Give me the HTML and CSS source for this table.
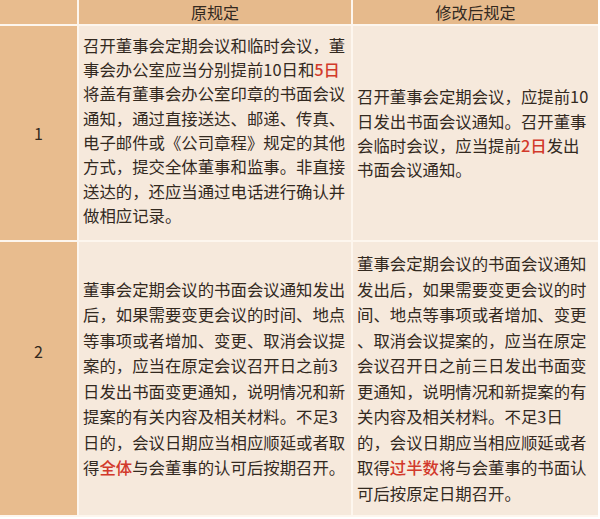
FILE: index.html
```html
<!DOCTYPE html>
<html lang="zh">
<head>
<meta charset="utf-8">
<link rel="stylesheet" href="styles.css">
</head>
<body>
<div class="table">
  <div class="cell head side"></div>
  <div class="cell head">原规定</div>
  <div class="cell head">修改后规定</div>

  <div class="cell side num">1</div>
  <div class="cell text r1 c2"><p class="body">召开董事会定期会议和临时会议，董<br>事会办公室应当分别提前10日和<span class="red">5日</span><br>将盖有董事会办公室印章的书面会议<br>通知，通过直接送达、邮递、传真、<br>电子邮件或《公司章程》规定的其他<br>方式，提交全体董事和监事。非直接<br>送达的，还应当通过电话进行确认并<br>做相应记录。</p></div>
  <div class="cell text r1"><p class="body">召开董事会定期会议，应提前10<br>日发出书面会议通知。召开董事<br>会临时会议，应当提前<span class="red">2日</span>发出<br>书面会议通知。</p></div>

  <div class="cell side num num2">2</div>
  <div class="cell text r2"><p class="body">董事会定期会议的书面会议通知发出<br>后，如果需要变更会议的时间、地点<br>等事项或者增加、变更、取消会议提<br>案的，应当在原定会议召开日之前3<br>日发出书面变更通知，说明情况和新<br>提案的有关内容及相关材料。不足3<br>日的，会议日期应当相应顺延或者取<br>得<span class="red">全体</span>与会董事的认可后按期召开。</p></div>
  <div class="cell text r2"><p class="body">董事会定期会议的书面会议通知<br>发出后，如果需要变更会议的时<br>间、地点等事项或者增加、变更<br>、取消会议提案的，应当在原定<br>会议召开日之前三日发出书面变<br>更通知，说明情况和新提案的有<br>关内容及相关材料。不足3日<br>的，会议日期应当相应顺延或者<br>取得<span class="red">过半数</span>将与会董事的书面认<br>可后按原定日期召开。</p></div>
</div>
</body>
</html>
```

FILE: styles.css
```css
html, body {
  margin: 0;
  padding: 0;
  background: #ffffff;
}

body {
  font-family: "Noto Sans CJK SC", "Noto Sans", sans-serif;
  color: #33291f;
}

.table {
  display: grid;
  grid-template-columns: 77px 272px 245px;
  grid-template-rows: 24px 214px 273px;
  gap: 2px;
  width: 598px;
  padding: 0 0 2px 0;
  background: #fdf6ee;
}

.cell {
  display: flex;
  align-items: center;
  background: #f6e9dc;
  font-size: 16.4px;
  white-space: nowrap;
}

.body {
  margin: 0;
}

.head {
  background: #e6ba8c;
  justify-content: center;
  font-size: 16px;
  line-height: 24px;
}

.side {
  background: #e8bc8e;
}

.num {
  justify-content: center;
  font-size: 16px;
}

.num2 {
  padding-bottom: 56px;
}

.text {
  padding-left: 4px;
}

.r1 {
  line-height: 24.3px;
}

.c2 {
  padding-bottom: 6px;
}

.r2 {
  line-height: 25.5px;
}

.red {
  color: #d2392b;
  font-weight: 500;
}
```
